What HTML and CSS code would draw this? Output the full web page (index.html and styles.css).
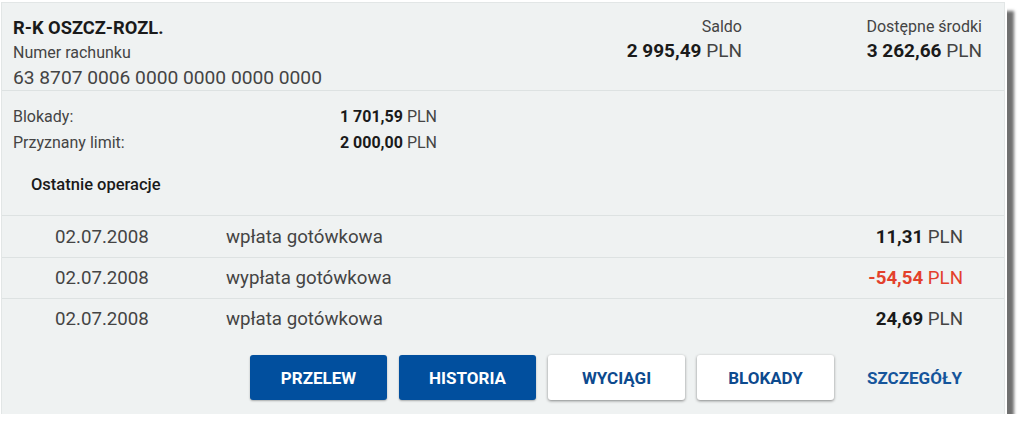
FILE: index.html
```html
<!DOCTYPE html>
<html lang="pl">
<head>
<meta charset="utf-8">
<title>Rachunek</title>
<link rel="stylesheet" href="styles.css">
</head>
<body>
<div class="page">
  <div class="card">
    <div class="header">
      <div class="acct">
        <div class="acct-name">R-K OSZCZ-ROZL.</div>
        <div class="acct-label">Numer rachunku</div>
        <div class="acct-number">63 8707 0006 0000 0000 0000 0000</div>
      </div>
      <div class="balances">
        <div class="bal">
          <div class="bal-label">Saldo</div>
          <div class="bal-value"><b>2 995,49</b> PLN</div>
        </div>
        <div class="bal">
          <div class="bal-label">Dostępne środki</div>
          <div class="bal-value"><b>3 262,66</b> PLN</div>
        </div>
      </div>
    </div>
    <div class="details">
      <div class="info">
        <div class="info-label">Blokady:</div>
        <div class="info-value"><b>1 701,59</b> PLN</div>
        <div class="info-label">Przyznany limit:</div>
        <div class="info-value"><b>2 000,00</b> PLN</div>
      </div>
      <div class="ops-title">Ostatnie operacje</div>
    </div>
    <div class="ops">
      <div class="op">
        <div class="op-date">02.07.2008</div>
        <div class="op-desc">wpłata gotówkowa</div>
        <div class="op-amount"><b>11,31</b> PLN</div>
      </div>
      <div class="op">
        <div class="op-date">02.07.2008</div>
        <div class="op-desc">wypłata gotówkowa</div>
        <div class="op-amount neg"><b>-54,54</b> PLN</div>
      </div>
      <div class="op">
        <div class="op-date">02.07.2008</div>
        <div class="op-desc">wpłata gotówkowa</div>
        <div class="op-amount"><b>24,69</b> PLN</div>
      </div>
    </div>
    <div class="actions">
      <button class="btn primary">PRZELEW</button>
      <button class="btn primary">HISTORIA</button>
      <button class="btn secondary">WYCIĄGI</button>
      <button class="btn secondary">BLOKADY</button>
      <button class="btn link">SZCZEGÓŁY</button>
    </div>
  </div>
</div>
</body>
</html>
```

FILE: styles.css
```css
html, body {
  margin: 0;
  padding: 0;
  background: #ffffff;
}
body {
  font-family: Roboto, "Liberation Sans", Arial, sans-serif;
  color: #444444;
}
.page {
  padding: 3px 0 0 2px;
}
.card {
  width: 1002px;
  height: 411px;
  background: #eff2f2;
  box-shadow: 0 0 0 1px #e2e6e6, 0 0 0 3px #ffffff, 9px 9px 3px 1px #707070;
  display: flex;
  flex-direction: column;
  box-sizing: border-box;
}
.header {
  display: flex;
  justify-content: space-between;
  padding: 12px 22px 0 11px;
  height: 88px;
  box-sizing: border-box;
  border-bottom: 1px solid #dde2e2;
}
.acct-name {
  font-size: 18.3px;
  font-weight: 700;
  color: #1a1a1a;
  line-height: 25px;
}
.acct-label {
  font-size: 16px;
  line-height: 26px;
}
.acct-number {
  font-size: 19.2px;
  line-height: 24px;
}
.balances {
  display: flex;
  gap: 80px;
}
.bal {
  width: 160px;
  text-align: right;
}
.bal-label {
  font-size: 16px;
  line-height: 24px;
}
.bal-value {
  font-size: 19px;
  line-height: 24px;
}
.bal-value b, .info-value b, .op-amount b {
  font-weight: 700;
  color: #1a1a1a;
}
.details {
  padding: 13px 0 0 11px;
  height: 125px;
  box-sizing: border-box;
  border-bottom: 1px solid #dde2e2;
}
.info {
  display: grid;
  grid-template-columns: 1fr auto;
  width: 424px;
  font-size: 16px;
  line-height: 26px;
}
.info-value {
  text-align: right;
}
.ops-title {
  margin: 16px 0 0 18px;
  font-size: 16.5px;
  font-weight: 500;
  line-height: 26px;
  color: #1a1a1a;
}
.op {
  display: flex;
  align-items: center;
  height: 41px;
  box-sizing: border-box;
  padding: 0 41px 0 53px;
  font-size: 18.7px;
}
.op + .op {
  border-top: 1px solid #dde2e2;
}
.op-date {
  width: 171px;
}
.op-desc {
  flex: 1;
}
.op-amount {
  text-align: right;
}
.op-amount.neg, .op-amount.neg b {
  color: #e3402b;
}
.actions {
  display: flex;
  justify-content: flex-end;
  gap: 12px;
  padding: 16px 21px 0 0;
}
.btn {
  width: 137px;
  height: 45px;
  border-radius: 3px;
  border: none;
  font-family: Roboto, "Liberation Sans", Arial, sans-serif;
  font-size: 17px;
  font-weight: 700;
  cursor: pointer;
}
.btn.primary {
  background: #014f9e;
  color: #ffffff;
  box-shadow: 0 1px 2px rgba(0, 0, 0, 0.3);
}
.btn.secondary {
  background: #ffffff;
  color: #0d4a8e;
  box-shadow: 0 1px 3px rgba(0, 0, 0, 0.45);
}
.btn.link {
  background: transparent;
  color: #15559b;
}
```
